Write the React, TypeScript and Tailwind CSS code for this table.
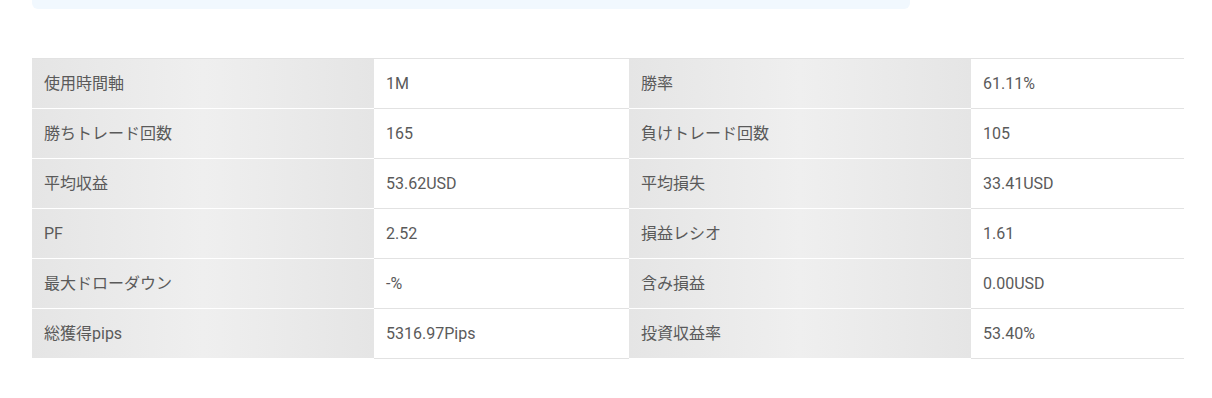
import React from "react";

const rows: [string, string, string, string][] = [
  ["使用時間軸", "1M", "勝率", "61.11%"],
  ["勝ちトレード回数", "165", "負けトレード回数", "105"],
  ["平均収益", "53.62USD", "平均損失", "33.41USD"],
  ["PF", "2.52", "損益レシオ", "1.61"],
  ["最大ドローダウン", "-%", "含み損益", "0.00USD"],
  ["総獲得pips", "5316.97Pips", "投資収益率", "53.40%"],
];

function Label({ text }: { text: string }) {
  return (
    <div className="h-[50px] flex items-center pl-3 border-b border-white bg-[linear-gradient(to_right,#e5e5e5,#efefef_50%,#e5e5e5)]">
      {text}
    </div>
  );
}

function Value({ text }: { text: string }) {
  return (
    <div className="h-[50px] flex items-center pl-3 border-b border-[#e2e2e2] bg-white">
      {text}
    </div>
  );
}

export default function App() {
  return (
    <div
      className="w-[1212px] h-[398px] bg-white text-[16px] text-[#5a5a5a]"
      style={{ fontFamily: 'Roboto, "Noto Sans CJK JP", sans-serif' }}
    >
      <div className="ml-8 w-[878px] h-[9px] bg-[#f1f8fe] rounded-b-md" />
      <div className="ml-8 mt-[49px] w-[1152px] grid grid-cols-[342px_255px_342px_213px] border-t border-[#e2e2e2]">
        {rows.map((r, i) => (
          <React.Fragment key={i}>
            <Label text={r[0]} />
            <Value text={r[1]} />
            <Label text={r[2]} />
            <Value text={r[3]} />
          </React.Fragment>
        ))}
      </div>
    </div>
  );
}
